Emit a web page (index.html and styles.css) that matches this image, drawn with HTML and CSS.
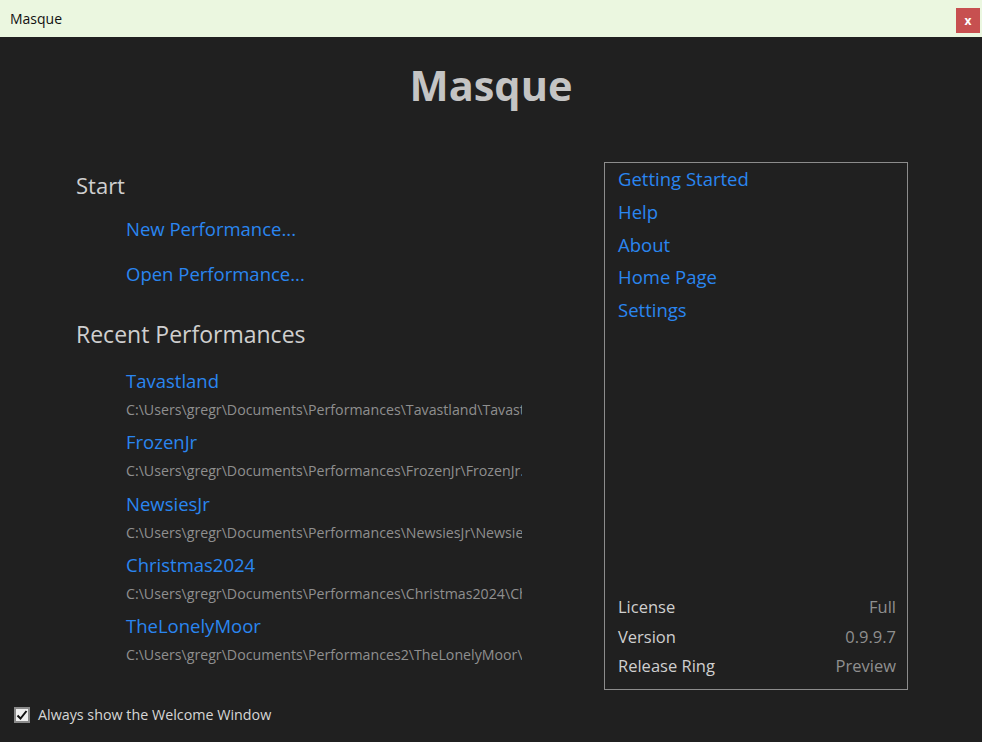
FILE: index.html
```html
<!DOCTYPE html>
<html>
<head>
<meta charset="utf-8">
<link rel="stylesheet" href="styles.css">
</head>
<body>
<div class="window">
  <div class="titlebar">
    <span class="title">Masque</span>
    <span class="close">x</span>
  </div>
  <div class="content">
    <h1 class="app-name">Masque</h1>
    <div class="columns">
      <div class="left">
        <h2 class="section start">Start</h2>
        <a class="action">New Performance...</a>
        <a class="action">Open Performance...</a>
        <h2 class="section recent">Recent Performances</h2>
        <div class="recent-list">
          <div class="item"><a class="item-name">Tavastland</a><div class="item-path">C:\Users\gregr\Documents\Performances\Tavastland\Tavastland.masque</div></div>
          <div class="item"><a class="item-name">FrozenJr</a><div class="item-path">C:\Users\gregr\Documents\Performances\FrozenJr\FrozenJr.masque</div></div>
          <div class="item"><a class="item-name">NewsiesJr</a><div class="item-path">C:\Users\gregr\Documents\Performances\NewsiesJr\NewsiesJr.masque</div></div>
          <div class="item"><a class="item-name">Christmas2024</a><div class="item-path">C:\Users\gregr\Documents\Performances\Christmas2024\Christmas2024.masque</div></div>
          <div class="item"><a class="item-name">TheLonelyMoor</a><div class="item-path">C:\Users\gregr\Documents\Performances2\TheLonelyMoor\TheLonelyMoor.masque</div></div>
        </div>
      </div>
      <div class="panel">
        <div class="links">
          <a class="link">Getting Started</a>
          <a class="link">Help</a>
          <a class="link">About</a>
          <a class="link">Home Page</a>
          <a class="link">Settings</a>
        </div>
        <div class="info">
          <div class="info-row"><span class="info-key">License</span><span class="info-val">Full</span></div>
          <div class="info-row"><span class="info-key">Version</span><span class="info-val">0.9.9.7</span></div>
          <div class="info-row"><span class="info-key">Release Ring</span><span class="info-val">Preview</span></div>
        </div>
      </div>
    </div>
    <label class="footer">
      <span class="checkbox"><svg width="12" height="12" viewBox="0 0 12 12"><path d="M1.5 6.5 L4.5 9.5 L10.5 2" fill="none" stroke="#111" stroke-width="2"/></svg></span>
      <span class="footer-text">Always show the Welcome Window</span>
    </label>
  </div>
</div>
</body>
</html>
```
FILE: styles.css
```css
html, body {
  margin: 0;
  padding: 0;
}
body {
  width: 982px;
  height: 742px;
  background: #202020;
  font-family: "Open Sans", "Noto Sans", sans-serif;
  overflow: hidden;
}
.window {
  display: flex;
  flex-direction: column;
  height: 742px;
}
.titlebar {
  height: 37px;
  background: #ebf7e0;
  display: flex;
  align-items: center;
  justify-content: space-between;
  padding: 0 2px 0 10px;
  box-sizing: border-box;
}
.title {
  font-size: 14px;
  color: #111;
}
.close {
  width: 24px;
  height: 25px;
  margin-top: 4px;
  background: #c75050;
  color: #fff;
  font-size: 12px;
  font-weight: bold;
  display: flex;
  align-items: center;
  justify-content: center;
}
.content {
  flex: 1;
  display: flex;
  flex-direction: column;
  position: relative;
}
.app-name {
  margin: 18px 0 0;
  text-align: center;
  font-size: 41.5px;
  line-height: 60px;
  font-weight: bold;
  color: #c4c4c4;
}
.columns {
  display: flex;
  margin-top: 47px;
  padding-left: 76px;
}
.left {
  width: 446px;
  display: flex;
  flex-direction: column;
  overflow: hidden;
}
.section {
  margin: 0;
  font-weight: normal;
  color: #cfcfcf;
}
.start {
  font-size: 22px;
  line-height: 30px;
  margin-top: 8px;
}
.recent {
  font-size: 23px;
  line-height: 30px;
  margin-top: 30px;
}
.action {
  margin-left: 50px;
  font-size: 18.5px;
  line-height: 30px;
  color: #2a86f0;
  margin-top: 14px;
}
.action + .action {
  margin-top: 15px;
}
.recent-list {
  margin-top: 16px;
  margin-left: 50px;
  display: flex;
  flex-direction: column;
}
.item {
  display: flex;
  flex-direction: column;
  height: 61.3px;
}
.item-name {
  font-size: 18.5px;
  line-height: 31px;
  color: #2a86f0;
}
.item-path {
  font-size: 14.2px;
  line-height: 28px;
  color: #8f8f8f;
  white-space: nowrap;
  overflow: hidden;
}
.panel {
  margin-left: 82px;
  width: 304px;
  height: 528px;
  box-sizing: border-box;
  border: 1px solid #8c8c8c;
  display: flex;
  flex-direction: column;
  justify-content: space-between;
  padding: 0 11px 8px 13px;
}
.links {
  display: flex;
  flex-direction: column;
}
.link {
  font-size: 18.5px;
  line-height: 32.8px;
  color: #2a86f0;
}
.info {
  display: flex;
  flex-direction: column;
}
.info-row {
  display: flex;
  justify-content: space-between;
  align-items: center;
  height: 29.5px;
  font-size: 16.5px;
  line-height: 24px;
}
.info-key {
  color: #cfcfcf;
}
.info-val {
  color: #8f8f8f;
}
.footer {
  position: absolute;
  left: 14px;
  bottom: 18px;
  display: flex;
  align-items: center;
  gap: 8px;
}
.checkbox {
  width: 16px;
  height: 16px;
  box-sizing: border-box;
  border: 2px solid #8a8a8a;
  background: #f0f0f0;
  display: flex;
  align-items: center;
  justify-content: center;
}
.footer-text {
  font-size: 14.3px;
  color: #d6d6d6;
}
```
